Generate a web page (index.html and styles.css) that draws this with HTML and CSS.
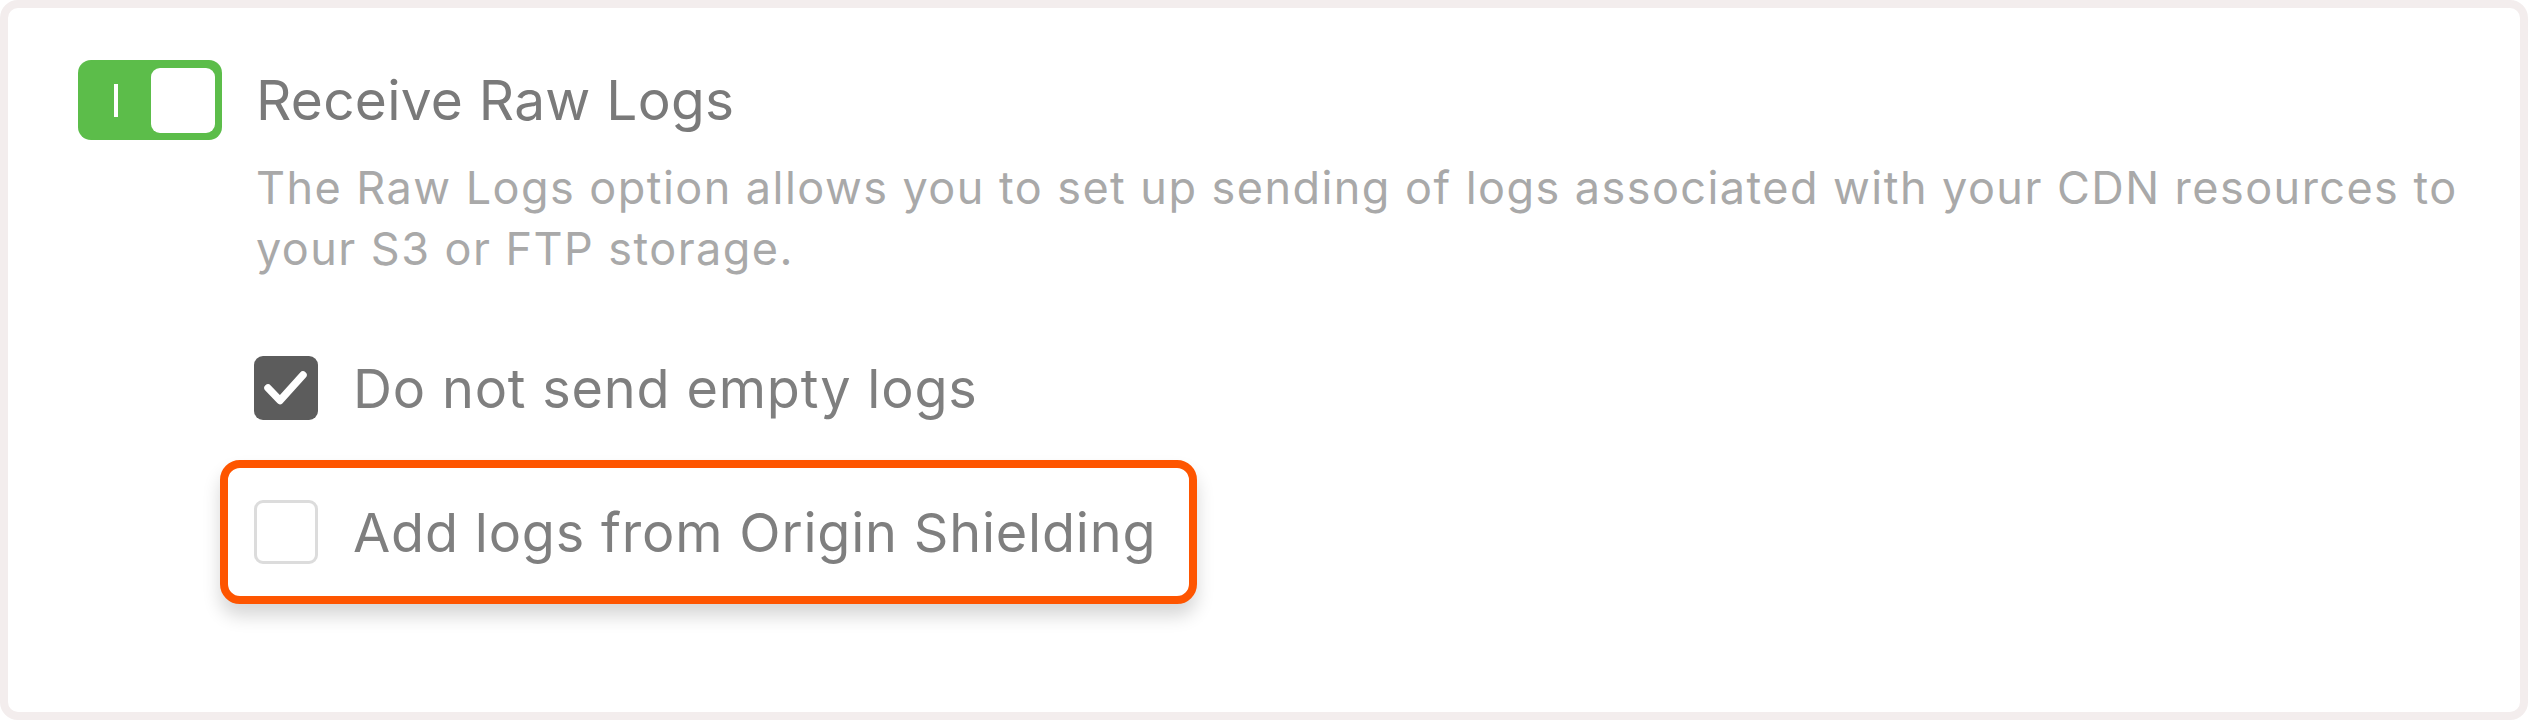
FILE: index.html
```html
<!DOCTYPE html>
<html lang="en">
<head>
<meta charset="utf-8">
<title>Receive Raw Logs</title>
<link rel="stylesheet" href="styles.css">
</head>
<body>
<div class="frame">
  <div class="setting">
    <div class="toggle" role="switch" aria-checked="true">
      <span class="toggle-mark"></span>
      <span class="toggle-knob"></span>
    </div>
    <div class="content">
      <div class="title">Receive Raw Logs</div>
      <p class="desc">The Raw Logs option allows you to set up sending of logs associated with your CDN resources to your S3 or FTP storage.</p>
      <div class="options">
        <div class="option">
          <span class="checkbox checked">
            <svg viewBox="0 0 64 64" width="64" height="64"><path d="M14 32 L26 44.5 L49 19" fill="none" stroke="#fff" stroke-width="7.5" stroke-linecap="round" stroke-linejoin="round"/></svg>
          </span>
          <span class="option-label">Do not send empty logs</span>
        </div>
        <div class="highlight">
          <div class="option">
            <span class="checkbox"></span>
            <span class="option-label">Add logs from Origin Shielding</span>
          </div>
        </div>
      </div>
    </div>
  </div>
</div>
</body>
</html>
```
FILE: styles.css
```css
* { box-sizing: border-box; }
html, body { margin: 0; padding: 0; background: #ffffff; }
body { font-family: Inter, "Noto Sans", "Liberation Sans", sans-serif; }

.frame {
  width: 2528px;
  height: 720px;
  border: 8px solid #f3eded;
  border-radius: 18px;
  background: #ffffff;
  padding: 52px 0 0 70px;
}

.setting {
  display: flex;
  align-items: flex-start;
  gap: 34px;
}

.toggle {
  position: relative;
  flex: none;
  width: 144px;
  height: 80px;
  border-radius: 13px;
  background: #5cbd4a;
  display: flex;
  align-items: center;
  padding: 0 7px 0 36px;
}
.toggle-mark {
  width: 4px;
  height: 33px;
  background: #ffffff;
}
.toggle-knob {
  margin-left: auto;
  width: 64px;
  height: 65px;
  border-radius: 9px;
  background: #ffffff;
}

.content { flex: 1; min-width: 0; max-width: 2240px; }

.title {
  font-size: 55px;
  line-height: 80px;
  letter-spacing: 0.25px;
  color: #7a7a7a;
  font-weight: 400;
}

.desc {
  margin: 17px 0 0;
  font-size: 45px;
  line-height: 61px;
  letter-spacing: 1.45px;
  color: #a9a9a9;
}

.options {
  margin: 77px 0 0 -2px;
  display: flex;
  flex-direction: column;
  align-items: flex-start;
}

.option {
  display: flex;
  align-items: center;
  gap: 35px;
  height: 64px;
}

.checkbox {
  flex: none;
  width: 64px;
  height: 64px;
  border-radius: 9px;
  border: 3px solid #dcdcdc;
  background: #ffffff;
}
.checkbox.checked {
  border: none;
  background: #5c5c5c;
}
.checkbox svg { display: block; }

.option-label {
  font-size: 54px;
  letter-spacing: 0.8px;
  color: #7f7f7f;
  white-space: nowrap;
}

.highlight {
  margin: 40px 0 0 -34px;
  border: 8px solid #fe5500;
  border-radius: 20px;
  padding: 32px 33px 32px 26px;
  background: #ffffff;
  box-shadow: 0 12px 18px rgba(0, 0, 0, 0.16);
}
```
